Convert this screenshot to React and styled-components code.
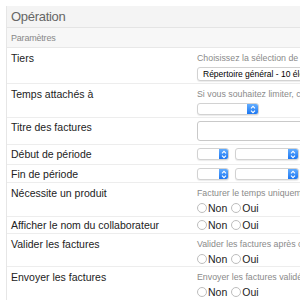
import React from "react";
import styled, { createGlobalStyle } from "styled-components";

const GlobalStyle = createGlobalStyle`
  html, body {
    margin: 0;
    padding: 0;
    background: #ffffff;
    overflow: hidden;
  }
  body {
    font-family: "Liberation Sans", Arial, sans-serif;
    color: #222;
  }
`;

const Page = styled.div`
  width: 300px;
  height: 300px;
  padding: 6px 0 0 6px;
  box-sizing: border-box;
  overflow: hidden;
`;

const Panel = styled.div`
  width: 400px;
  min-height: 320px;
  border-left: 1px solid #e6e6e6;
`;

const Title = styled.div`
  height: 21px;
  display: flex;
  align-items: center;
  padding-left: 4px;
  background: #f4f4f4;
  border-bottom: 1px solid #e4e4e4;
  font-size: 13px;
  font-weight: 300;
  letter-spacing: -0.3px;
  color: #666;
`;

const Section = styled.div`
  height: 19px;
  display: flex;
  align-items: center;
  padding-left: 4px;
  background: #f7f7f7;
  border-bottom: 1px solid #e8e8e8;
  font-size: 9px;
  letter-spacing: -0.2px;
  color: #888;
`;

const Row = styled.div`
  display: grid;
  grid-template-columns: 186px 1fr;
  padding: ${(p) => p.$top || "4px"} 0 ${(p) => p.$bottom || "2px"} 4px;
  border-bottom: 1px solid #ededed;
`;

const Label = styled.div`
  font-size: 10.5px;
  line-height: 12px;
  color: #222;
  white-space: nowrap;
`;

const Field = styled.div`
  display: flex;
  flex-direction: column;
  align-items: flex-start;
  gap: 3px;
  min-width: 0;
`;

const Hint = styled.div`
  font-size: 8.8px;
  line-height: 12px;
  color: #8a8a8a;
  white-space: nowrap;
`;

const Inline = styled.div`
  display: flex;
  align-items: center;
  gap: 6px;
`;

const Popup = styled.div`
  display: flex;
  align-items: stretch;
  width: ${(p) => p.$width};
  height: ${(p) => p.$height || "12px"};
  background: #fff;
  border: 1px solid #d2d2d2;
  border-radius: 3px;
  box-shadow: 0 1px 1px rgba(0, 0, 0, 0.08);
  box-sizing: border-box;
  overflow: hidden;
`;

const PopupText = styled.div`
  flex: 1;
  padding-left: 5px;
  font-size: 8.5px;
  line-height: 12px;
  color: #000;
  white-space: nowrap;
  overflow: hidden;
`;

const Stepper = styled.div`
  width: ${(p) => p.$width || "10px"};
  display: flex;
  align-items: center;
  justify-content: center;
  background: linear-gradient(#63adff, #1b76f2);
`;

const TextInput = styled.div`
  width: 160px;
  height: 20px;
  border: 1px solid #c9c9c9;
  border-radius: 3px;
  box-sizing: border-box;
  background: #fff;
`;

const Radios = styled.div`
  display: flex;
  align-items: center;
  gap: 4px;
  height: 12px;
`;

const RadioItem = styled.label`
  display: flex;
  align-items: center;
  font-size: 10.5px;
  line-height: 12px;
  color: #222;
`;

const Circle = styled.span`
  width: 10px;
  height: 10px;
  border-radius: 50%;
  border: 1px solid #bdbdbd;
  background: #fff;
  box-sizing: border-box;
  margin-right: 1px;
`;

function Chevrons() {
  return (
    <svg width="6" height="9" viewBox="0 0 6 9">
      <path d="M1 3.4 L3 1.4 L5 3.4 M1 5.6 L3 7.6 L5 5.6" fill="none" stroke="#fff" strokeWidth="1.1" />
    </svg>
  );
}

function Select({ width, height, text, stepper }) {
  return (
    <Popup $width={width} $height={height}>
      <PopupText>{text}</PopupText>
      {stepper && (
        <Stepper $width={stepper}>
          <Chevrons />
        </Stepper>
      )}
    </Popup>
  );
}

function YesNo() {
  return (
    <Radios>
      <RadioItem>
        <Circle />
        Non
      </RadioItem>
      <RadioItem>
        <Circle />
        Oui
      </RadioItem>
    </Radios>
  );
}

export default function App() {
  return (
    <>
      <GlobalStyle />
      <Page>
        <Panel>
          <Title>Opération</Title>
          <Section>Paramètres</Section>

          <Row>
            <Label>Tiers</Label>
            <Field>
              <Hint>Choisissez la sélection de tiers à facturer</Hint>
              <Select width="190px" height="14px" text="Répertoire général - 10 éléments" />
            </Field>
          </Row>

          <Row>
            <Label>Temps attachés à</Label>
            <Field>
              <Hint>Si vous souhaitez limiter, choisissez un projet</Hint>
              <Select width="62px" stepper="11px" />
            </Field>
          </Row>

          <Row $top="3px" $bottom="3px">
            <Label>Titre des factures</Label>
            <Field>
              <TextInput />
            </Field>
          </Row>

          <Row $top="3px" $bottom="4px">
            <Label>Début de période</Label>
            <Inline>
              <Select width="32px" stepper="9px" />
              <Select width="64px" stepper="10px" />
            </Inline>
          </Row>

          <Row $top="3px" $bottom="2px">
            <Label>Fin de période</Label>
            <Inline>
              <Select width="32px" stepper="9px" />
              <Select width="64px" stepper="10px" />
            </Inline>
          </Row>

          <Row>
            <Label>Nécessite un produit</Label>
            <Field>
              <Hint>Facturer le temps uniquement s'il a un produit</Hint>
              <YesNo />
            </Field>
          </Row>

          <Row $top="2px">
            <Label>Afficher le nom du collaborateur</Label>
            <Field>
              <YesNo />
            </Field>
          </Row>

          <Row $bottom="1px">
            <Label>Valider les factures</Label>
            <Field>
              <Hint>Valider les factures après création</Hint>
              <YesNo />
            </Field>
          </Row>

          <Row>
            <Label>Envoyer les factures</Label>
            <Field>
              <Hint>Envoyer les factures validées par e-mail</Hint>
              <YesNo />
            </Field>
          </Row>
        </Panel>
      </Page>
    </>
  );
}
